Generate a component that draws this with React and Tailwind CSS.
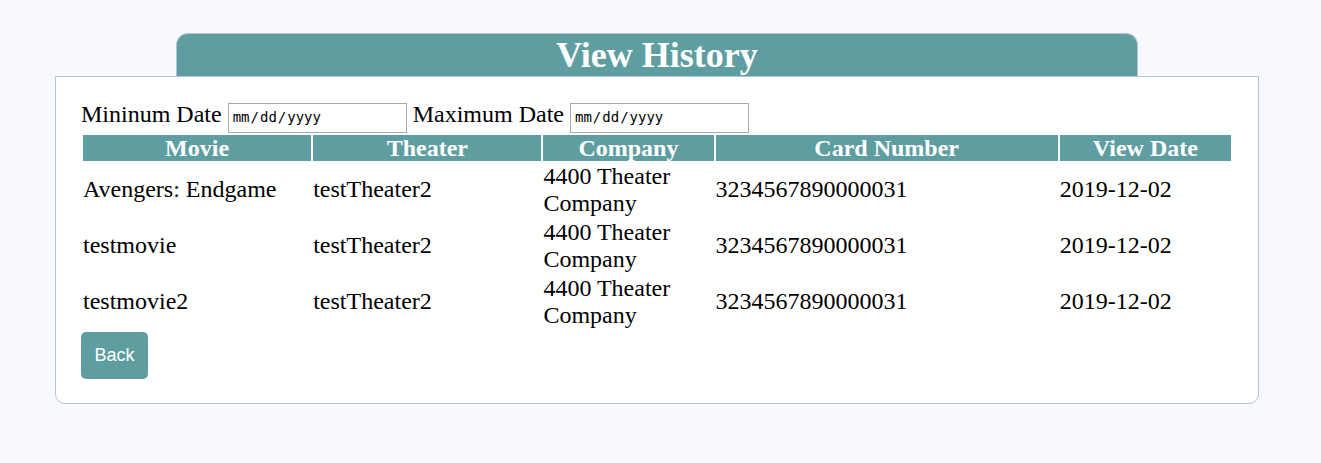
import React from 'react';

export default function App() {
  const rows = [
    { movie: 'Avengers: Endgame', theater: 'testTheater2', company: '4400 Theater Company', card: '3234567890000031', date: '2019-12-02' },
    { movie: 'testmovie', theater: 'testTheater2', company: '4400 Theater Company', card: '3234567890000031', date: '2019-12-02' },
    { movie: 'testmovie2', theater: 'testTheater2', company: '4400 Theater Company', card: '3234567890000031', date: '2019-12-02' },
  ];

  const serif = { fontFamily: '"Liberation Serif", "Times New Roman", serif' };
  const dateInput =
    'w-[179px] h-[30px] border border-[#a9a9a9] px-[3px] text-[14px] text-black outline-none [&::-webkit-calendar-picker-indicator]:hidden';

  return (
    <div className="min-h-[463px] w-full bg-[#f8f8ff] pt-[33px]" style={serif}>
      {/* title tab */}
      <div className="ml-[176px] w-[962px] h-[44px] rounded-t-[12px] bg-[#5f9ea0] border border-b-0 border-[#b0c4de] text-center text-white font-bold text-[36px] leading-[42px]">
        View History
      </div>

      {/* card */}
      <div className="-mt-px ml-[55px] w-[1204px] border border-[#b0c4de] rounded-b-[10px] bg-white px-[25px] pt-[24px] pb-[24px]">
        <div className="text-[24px] leading-[27px] text-black">
          Mininum Date{' '}
          <input type="date" className={dateInput} style={{ fontFamily: '"DejaVu Sans Mono", monospace' }} />{' '}
          Maximum Date{' '}
          <input type="date" className={dateInput} style={{ fontFamily: '"DejaVu Sans Mono", monospace' }} />
        </div>

        <table className="w-full table-fixed border-separate border-spacing-[2px]">
          <colgroup>
            <col className="w-[228px]" />
            <col className="w-[228px]" />
            <col className="w-[170px]" />
            <col className="w-[342px]" />
            <col className="w-[171px]" />
          </colgroup>
          <thead>
            <tr>
              {['Movie', 'Theater', 'Company', 'Card Number', 'View Date'].map((h) => (
                <th key={h} className="bg-[#5f9ea0] text-white font-bold text-[24px] leading-[26px] text-center">
                  {h}
                </th>
              ))}
            </tr>
          </thead>
          <tbody>
            {rows.map((r, i) => (
              <tr key={i} className="text-[24px] leading-[27px] text-black">
                <td className="align-middle">{r.movie}</td>
                <td className="align-middle">{r.theater}</td>
                <td className="align-middle">{r.company}</td>
                <td className="align-middle">{r.card}</td>
                <td className="align-middle">{r.date}</td>
              </tr>
            ))}
          </tbody>
        </table>

        <button
          className="mt-px w-[67px] h-[47px] rounded-[5px] bg-[#5f9ea0] text-white text-[18px]"
          style={{ fontFamily: '"Liberation Sans", Arial, sans-serif' }}
        >
          Back
        </button>
      </div>
    </div>
  );
}
